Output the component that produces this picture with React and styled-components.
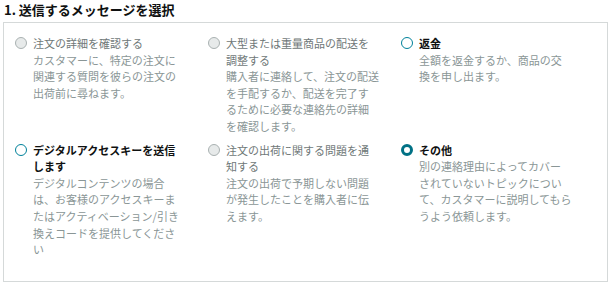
import React from "react"
import styled, { createGlobalStyle } from "styled-components"

const GlobalStyle = createGlobalStyle`
  body {
    margin: 0;
    background: #ffffff;
    font-family: "Noto Sans CJK JP", "Noto Sans", sans-serif;
  }
`

const Page = styled.div`
  padding: 0 0 0 3px;
  width: 605px;
`

const Heading = styled.h3`
  margin: 0;
  padding: 1px 0 0 1px;
  height: 21px;
  font-size: 13px;
  line-height: 18px;
  font-weight: 700;
  color: #0f1111;
`

const Box = styled.div`
  box-sizing: border-box;
  width: 605px;
  height: 260px;
  border: 1px solid #d5d9d9;
  padding: 12px 12px 0 11px;
  display: grid;
  grid-template-columns: repeat(3, 193px);
  grid-row-gap: 7px;
  align-content: start;
`

const Option = styled.label`
  display: flex;
  align-items: flex-start;
  gap: 6px;
  cursor: ${p => (p.disabled ? "default" : "pointer")};
`

const Radio = styled.span`
  box-sizing: border-box;
  flex: none;
  width: 12px;
  height: 12px;
  margin-top: 2px;
  border-radius: 50%;
  background: ${p => (p.disabled ? "#e7eaea" : "#ffffff")};
  border: ${p =>
    p.checked ? "3.5px solid #007185" : p.disabled ? "1px solid #a9b1b1" : "1.5px solid #00819a"};
`

const Texts = styled.div`
  font-size: 11px;
  line-height: 16.6px;
  white-space: pre-line;
`

const Title = styled.div`
  font-weight: ${p => (p.disabled ? 400 : 700)};
  color: ${p => (p.disabled ? "#6f7878" : "#0f1111")};
`

const Desc = styled.div`
  color: #8a9696;
`

const options = [
  {
    title: "注文の詳細を確認する",
    desc: "カスタマーに、特定の注文に\n関連する質問を彼らの注文の\n出荷前に尋ねます。",
    disabled: true,
  },
  {
    title: "大型または重量商品の配送を\n調整する",
    desc: "購入者に連絡して、注文の配送\nを手配するか、配送を完了す\nるために必要な連絡先の詳細\nを確認します。",
    disabled: true,
  },
  {
    title: "返金",
    desc: "全額を返金するか、商品の交\n換を申し出ます。",
  },
  {
    title: "デジタルアクセスキーを送信\nします",
    desc: "デジタルコンテンツの場合\nは、お客様のアクセスキーま\nたはアクティベーション/引き\n換えコードを提供してくださ\nい",
  },
  {
    title: "注文の出荷に関する問題を通\n知する",
    desc: "注文の出荷で予期しない問題\nが発生したことを購入者に伝\nえます。",
    disabled: true,
  },
  {
    title: "その他",
    desc: "別の連絡理由によってカバー\nされていないトピックについ\nて、カスタマーに説明してもら\nうよう依頼します。",
    checked: true,
  },
]

export default function App() {
  return (
    <Page>
      <GlobalStyle />
      <Heading>1. 送信するメッセージを選択</Heading>
      <Box>
        {options.map(o => (
          <Option key={o.title} disabled={o.disabled}>
            <Radio disabled={o.disabled} checked={o.checked} />
            <Texts>
              <Title disabled={o.disabled}>{o.title}</Title>
              <Desc>{o.desc}</Desc>
            </Texts>
          </Option>
        ))}
      </Box>
    </Page>
  )
}
